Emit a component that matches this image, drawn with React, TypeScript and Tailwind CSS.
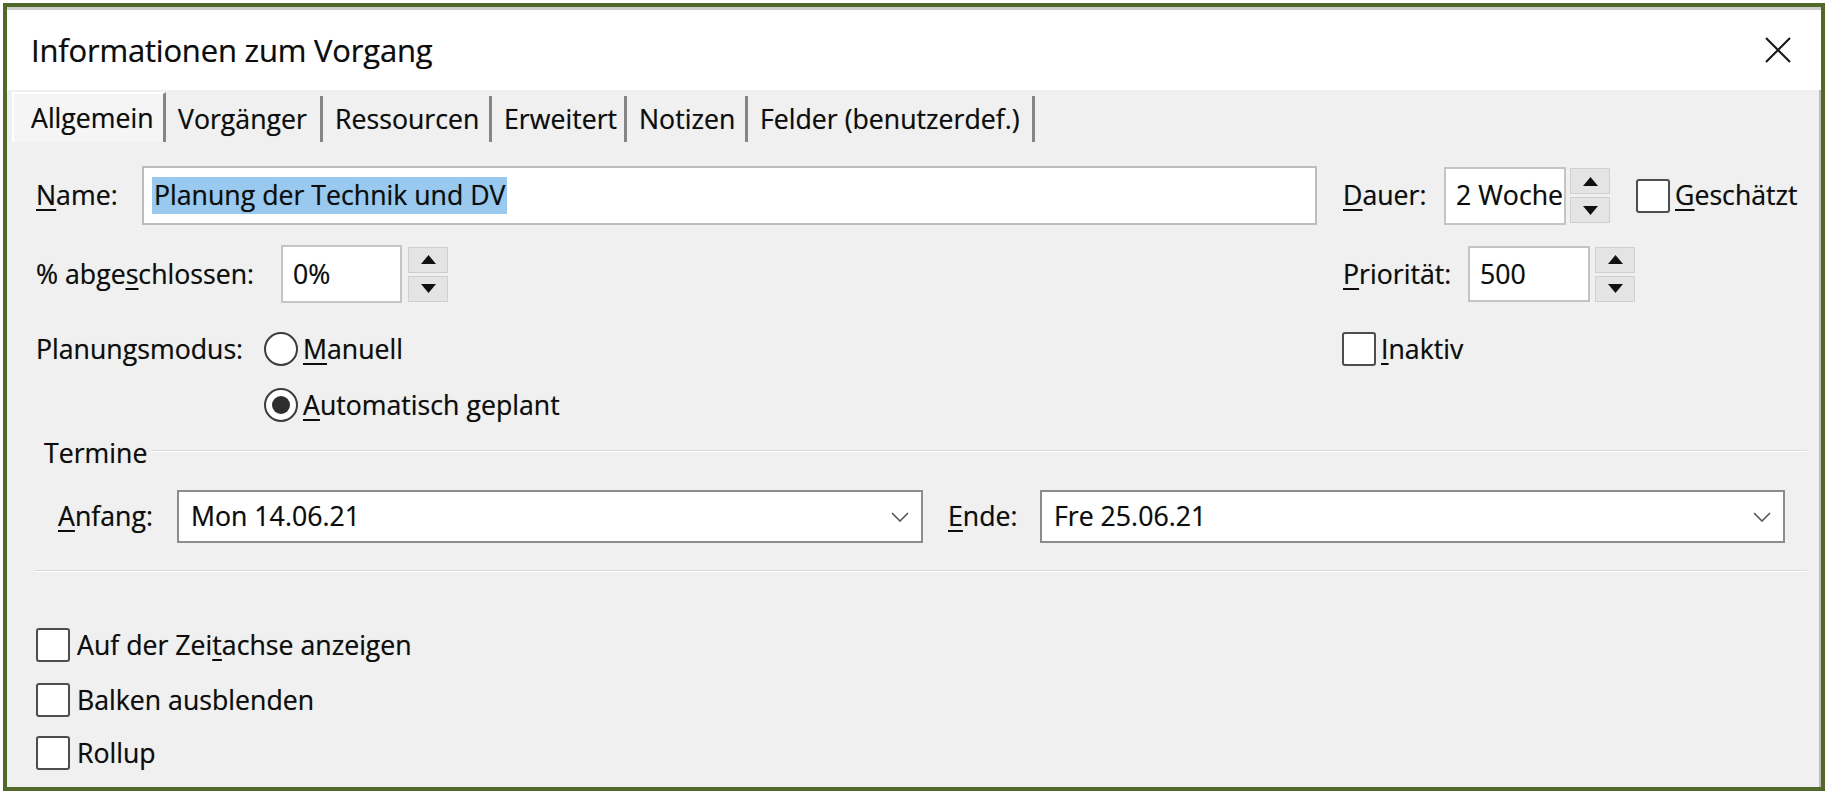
import React from 'react';

const Tri = ({ up }: { up?: boolean }) => (
  <svg width="15" height="9" viewBox="0 0 15 9">
    <path d={up ? 'M7.5 0 L15 9 L0 9 Z' : 'M0 0 L15 0 L7.5 9 Z'} fill="#111" />
  </svg>
);

const Spinner = () => (
  <div className="flex flex-col gap-[3px] w-[40px]">
    <div className="h-[26px] bg-[#e4e4e4] border border-[#cfcfcf] flex items-center justify-center">
      <Tri up />
    </div>
    <div className="h-[26px] bg-[#e4e4e4] border border-[#cfcfcf] flex items-center justify-center">
      <Tri />
    </div>
  </div>
);

const Box = () => (
  <span className="block w-[34px] h-[34px] shrink-0 bg-white border-2 border-[#4d4d4d] rounded-[3px]" />
);

const Radio = ({ on }: { on?: boolean }) => (
  <span className="flex w-[34px] h-[34px] shrink-0 items-center justify-center rounded-full bg-white border-2 border-[#3c3c3c]">
    {on && <span className="block w-[18px] h-[18px] rounded-full bg-[#2e2e2e]" />}
  </span>
);

const Chevron = () => (
  <svg width="18" height="10" viewBox="0 0 18 10" className="shrink-0">
    <path d="M1 1 L9 9 L17 1" fill="none" stroke="#555" strokeWidth="1.6" />
  </svg>
);

const tabs = [
  { label: 'Allgemein', w: 'w-[154px]', on: true },
  { label: 'Vorgänger', w: 'w-[157px]' },
  { label: 'Ressourcen', w: 'w-[169px]' },
  { label: 'Erweitert', w: 'w-[135px]' },
  { label: 'Notizen', w: 'w-[121px]' },
  { label: 'Felder (benutzerdef.)', w: 'w-[287px]' },
];

export default function App() {
  return (
    <div className="w-[1828px] h-[793px] bg-white pt-[3px] pl-[3px] font-['Open_Sans','Noto_Sans',sans-serif] text-[#0d0d0d] [text-shadow:0_0_0.7px_rgba(0,0,0,0.45)]">
      <div className="w-[1822px] h-[788px] border-4 border-[#52682a] flex flex-col overflow-hidden">
        <div className="h-[3px] bg-[#cdcdcd] shrink-0" />

        {/* title bar */}
        <div className="h-[80px] shrink-0 bg-white flex items-center justify-between pl-[24px] pr-[29px]">
          <span className="text-[31px] leading-none tracking-[-0.2px]">Informationen zum Vorgang</span>
          <svg width="28" height="28" viewBox="0 0 28 28">
            <path d="M2 2 L26 26 M26 2 L2 26" stroke="#1a1a1a" strokeWidth="2.2" />
          </svg>
        </div>

        <div className="flex-1 bg-[#f0f0f0] border-r-2 border-[#bdbdbd] flex flex-col text-[26.7px] leading-none">
          {/* tabs */}
          <div className="h-[52px] shrink-0 flex items-end pl-[5px]">
            {tabs.map((t) => (
              <div
                key={t.label}
                className={
                  t.on
                    ? `${t.w} h-[50px] flex items-center pl-[17px] bg-[#f5f5f5] border-l-2 border-t-2 border-white border-r-[3px] border-r-[#858585]`
                    : `${t.w} h-[46px] flex items-center pl-[12px] border-r-[3px] border-[#858585] whitespace-nowrap`
                }
              >
                <span>{t.label}</span>
              </div>
            ))}
          </div>

          <div className="flex flex-col pl-[29px] pt-[24px]">
            {/* name row */}
            <div className="flex items-center h-[59px]">
              <div className="flex items-center w-[1307px]">
                <span className="w-[106px]"><u className="underline-offset-4">N</u>ame:</span>
                <div className="w-[1175px] h-[59px] bg-white border-2 border-[#bcbcbc] flex items-center pl-[8px]">
                  <span className="bg-[#99c9ef] h-[37px] flex items-center px-[2px]">Planung der Technik und DV</span>
                </div>
              </div>
              <span className="w-[101px]"><u className="underline-offset-4">D</u>auer:</span>
              <div className="w-[122px] h-[58px] bg-white border-2 border-[#c4c4c4] flex items-center pl-[10px] overflow-hidden whitespace-nowrap">
                2 Woche
              </div>
              <div className="ml-[4px]"><Spinner /></div>
              <div className="ml-[26px] flex items-center gap-[5px]">
                <Box />
                <span><u className="underline-offset-4">G</u>eschätzt</span>
              </div>
            </div>

            {/* percent row */}
            <div className="flex items-center h-[58px] mt-[20px]">
              <div className="flex items-center w-[1307px]">
                <span className="w-[245px]">% abge<u className="underline-offset-4">s</u>chlossen:</span>
                <div className="w-[121px] h-[58px] bg-white border-2 border-[#c4c4c4] flex items-center pl-[10px]">0%</div>
                <div className="ml-[6px]"><Spinner /></div>
              </div>
              <span className="w-[125px]"><u className="underline-offset-4">P</u>riorität:</span>
              <div className="w-[122px] h-[56px] bg-white border-2 border-[#c4c4c4] flex items-center pl-[10px]">500</div>
              <div className="ml-[5px]"><Spinner /></div>
            </div>

            {/* planning mode */}
            <div className="flex mt-[27px]">
              <div className="flex w-[1307px]">
                <span className="w-[228px] h-[38px] flex items-center">Planungsmodus:</span>
                <div className="flex flex-col gap-[18px]">
                  <div className="flex items-center h-[38px] gap-[5px]">
                    <Radio />
                    <span><u className="underline-offset-4">M</u>anuell</span>
                  </div>
                  <div className="flex items-center h-[38px] gap-[5px]">
                    <Radio on />
                    <span><u className="underline-offset-4">A</u>utomatisch geplant</span>
                  </div>
                </div>
              </div>
              <div className="flex items-center h-[38px] gap-[5px] -ml-[1px]">
                <Box />
                <span><u className="underline-offset-4">I</u>naktiv</span>
              </div>
            </div>

            {/* Termine */}
            <div className="flex items-center h-[30px] mt-[14px] pr-[12px]">
              <span className="ml-[8px] w-[108px]">Termine</span>
              <div className="flex-1 border-t border-[#dadada] border-b border-b-white -mt-[4px]" />
            </div>

            <div className="flex items-center h-[53px] mt-[22px]">
              <span className="w-[141px] pl-[22px]"><u className="underline-offset-4">A</u>nfang:</span>
              <div className="w-[746px] h-[53px] bg-white border-2 border-[#8c8c8c] flex items-center justify-between pl-[12px] pr-[12px]">
                <span>Mon 14.06.21</span>
                <Chevron />
              </div>
              <span className="ml-[25px] w-[92px]"><u className="underline-offset-4">E</u>nde:</span>
              <div className="w-[745px] h-[53px] bg-white border-2 border-[#8c8c8c] flex items-center justify-between pl-[12px] pr-[12px]">
                <span>Fre 25.06.21</span>
                <Chevron />
              </div>
            </div>

            <div className="mt-[27px] mr-[12px] -ml-[1px] border-t border-[#dadada] border-b border-b-white" />

            {/* checkboxes */}
            <div className="flex flex-col mt-[53px] gap-[15px]">
              <div className="flex items-center h-[40px] gap-[7px]">
                <Box />
                <span>Auf der Zei<u className="underline-offset-4">t</u>achse anzeigen</span>
              </div>
              <div className="flex items-center h-[40px] gap-[7px]">
                <Box />
                <span>Balken ausblenden</span>
              </div>
              <div className="flex items-center h-[40px] gap-[7px] -mt-[2px]">
                <Box />
                <span>Rollup</span>
              </div>
            </div>
          </div>
        </div>
      </div>
    </div>
  );
}
